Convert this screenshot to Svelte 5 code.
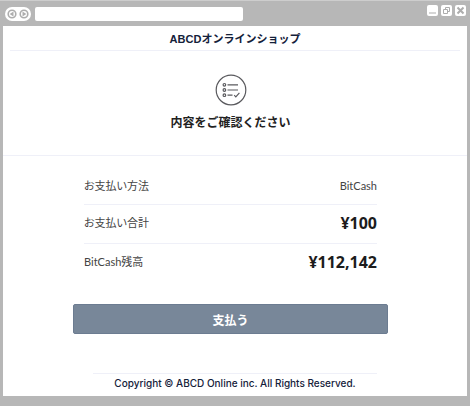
<script lang="ts">
	type Row = { label: string; value: string; amount?: boolean };

	const rows: Row[] = [
		{ label: 'お支払い方法', value: 'BitCash' },
		{ label: 'お支払い合計', value: '¥100', amount: true },
		{ label: 'BitCash残高', value: '¥112,142', amount: true }
	];

	let address = $state('');
</script>

<div class="browser">
	<div class="toolbar">
		<div class="history">
			<button type="button" aria-label="Back">
				<svg viewBox="0 0 10 10" aria-hidden="true">
					<circle cx="5" cy="5" r="3.8" />
					<path class="solid" d="M6.5 2.6v4.8L2.6 5z" />
				</svg>
			</button>
			<button type="button" aria-label="Forward">
				<svg viewBox="0 0 10 10" aria-hidden="true">
					<circle cx="5" cy="5" r="3.8" />
					<path class="solid" d="M3.5 2.6v4.8L7.4 5z" />
				</svg>
			</button>
		</div>
		<input class="address" type="text" aria-label="Address" bind:value={address} />
		<div class="window-buttons">
			<button type="button" aria-label="Minimize">
				<svg viewBox="0 0 11 11" aria-hidden="true"><path d="M2 8h7" /></svg>
			</button>
			<button type="button" aria-label="Restore">
				<svg viewBox="0 0 11 11" aria-hidden="true">
					<path d="M4.5 4.5v-2h4v4h-2M2.5 4.5h4v4h-4z" />
				</svg>
			</button>
			<button type="button" aria-label="Close">
				<svg viewBox="0 0 11 11" aria-hidden="true">
					<path class="cross" d="M2.5 2.5l6 6M8.5 2.5l-6 6" />
				</svg>
			</button>
		</div>
	</div>

	<div class="page">
		<header class="shop">ABCDオンラインショップ</header>

		<main>
			<section class="intro">
				<svg class="list-icon" viewBox="0 0 32 32" aria-hidden="true">
					<circle cx="16" cy="16" r="14.8" />
					<circle cx="9.4" cy="10.8" r="1.3" />
					<circle cx="9.4" cy="16" r="1.3" />
					<circle cx="9.4" cy="21.2" r="1.3" />
					<path d="M12.5 10.8h10.5M12.5 16h10.5M12.5 21.2h5M19.2 21.2l1.6 1.6 3.6-4" />
				</svg>
				<h1>内容をご確認ください</h1>
			</section>

			<section class="payment">
				<dl>
					{#each rows as row (row.label)}
						<div class="row">
							<dt>{row.label}</dt>
							<dd class:amount={row.amount}>{row.value}</dd>
						</div>
					{/each}
				</dl>
				<button type="button" class="pay">支払う</button>
			</section>
		</main>

		<footer>Copyright © ABCD Online inc. All Rights Reserved.</footer>
	</div>
</div>

<style>
	:global(body) {
		margin: 0;
		background: #b7b7b7;
	}

	.browser {
		padding: 0 3px 10px;
		background: #b7b7b7;
		border-top: 1px solid #cdcdcd;
		font-family: Lato, 'Noto Sans CJK JP', sans-serif;
		color: #222;
	}

	button {
		padding: 0;
		border: none;
		font: inherit;
		cursor: pointer;
	}

	.toolbar {
		display: flex;
		align-items: center;
		gap: 4px;
		height: 25px;
		padding-left: 2px;
	}

	.history {
		display: flex;
		gap: 2px;
		padding: 2px;
		border-radius: 7px;
		background: #fff;
	}

	.history button {
		width: 10px;
		height: 10px;
		background: none;
	}

	.toolbar svg {
		display: block;
		width: 100%;
		height: 100%;
		fill: none;
		stroke: #adadad;
		stroke-width: 1;
	}

	.history circle {
		stroke-width: 1.6;
	}

	.toolbar .solid {
		fill: #adadad;
		stroke: none;
	}

	.toolbar .cross {
		stroke-width: 2;
	}

	.address {
		box-sizing: border-box;
		width: 45%;
		height: 14px;
		padding: 0 4px;
		border: none;
		border-radius: 2px;
		background: #fff;
		font-size: 10px;
	}

	.window-buttons {
		display: flex;
		gap: 3px;
		margin: 0 1px 6px auto;
	}

	.window-buttons button {
		width: 11px;
		height: 11px;
		border-radius: 2px;
		background: #fff;
	}

	.page {
		background: #fff;
	}

	.shop {
		margin: 0 7px;
		padding: 5px 0 3px;
		border-bottom: 1px solid #eff0f8;
		font-family: 'Liberation Sans', 'Noto Sans CJK JP', sans-serif;
		font-size: 11px;
		font-weight: 700;
		line-height: 16px;
		text-align: center;
		color: #14213a;
	}

	.intro {
		padding: 23px 9px 22px 0;
		border-bottom: 1px solid #eff0f8;
		text-align: center;
	}

	.list-icon {
		display: block;
		width: 32px;
		height: 32px;
		margin: 0 auto;
		fill: none;
		stroke: #5a5a5e;
		stroke-width: 1.2;
	}

	h1 {
		margin: 7px 0 0;
		font-size: 12px;
		font-weight: 700;
		line-height: 20px;
	}

	.payment {
		padding: 14px 79px 39px 70px;
	}

	dl {
		margin: 0 11px;
	}

	.row {
		display: flex;
		align-items: center;
		justify-content: space-between;
		padding: 8px 0 10px;
		border-bottom: 1px solid #eff0f8;
		font-size: 11px;
		line-height: 20px;
		color: #444;
	}

	.row:first-child {
		padding: 6px 0 8px;
	}

	.row:last-child {
		border-bottom: none;
	}

	dt {
		font-feature-settings: 'palt';
	}

	dd {
		margin: 0;
	}

	.amount {
		font-family: 'Open Sans', 'Noto Sans', sans-serif;
		font-size: 16px;
		font-weight: 700;
		color: #1c1c1c;
	}

	.pay {
		display: block;
		width: 100%;
		height: 30px;
		margin-top: 22px;
		border: 1px solid #6c7c91;
		border-radius: 2px;
		background: #788799;
		font-size: 12px;
		font-weight: 700;
		color: #fff;
	}

	footer {
		margin: 0 90px;
		padding: 1px 0 5px;
		border-top: 1px solid #eff0f8;
		font-family: Inter, sans-serif;
		font-size: 10px;
		font-weight: 500;
		line-height: 16px;
		text-align: center;
		white-space: nowrap;
		color: #14213a;
	}
</style>
